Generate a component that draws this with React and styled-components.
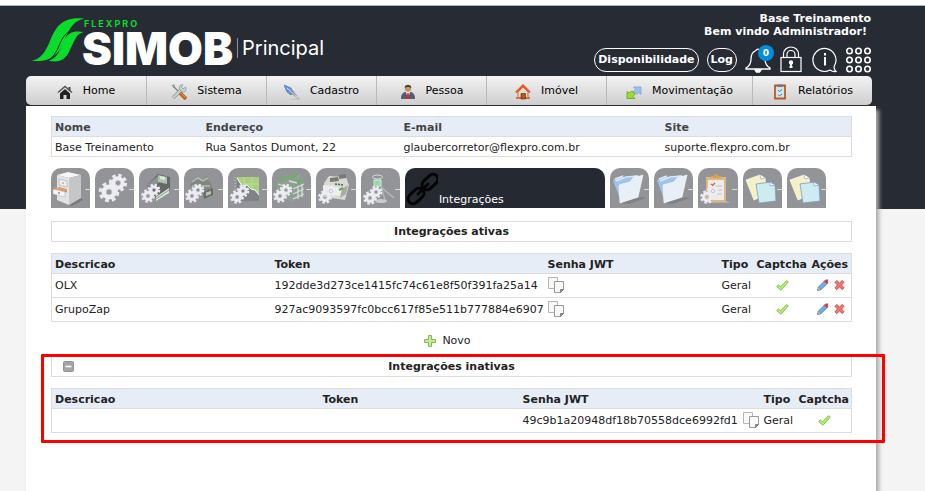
import React from 'react';
import styled, { createGlobalStyle } from 'styled-components';

const GlobalStyle = createGlobalStyle`
  * {
    box-sizing: border-box;
  }

  body {
    margin: 0;
    background: #f4f4f4;
    color: #222;
    font-family: 'DejaVu Sans', Verdana, sans-serif;
    font-size: 11px;
    line-height: 13px;
  }
`;

const Page = styled.div`
  display: flex;
  flex-direction: column;
  min-height: 100vh;
  padding: 0 49px 0 26px;
  border-top: 5px solid #fff;
  background: linear-gradient(#a9b8ad 1px, #272b33 1px, #272b33 204px, #f4f4f4 204px);
`;

const Header = styled.header`
  display: flex;
  justify-content: space-between;
  height: 71px;
  padding: 7px 5px 0 5px;
  color: #fff;
`;

const Brand = styled.a`
  display: flex;
  align-items: flex-start;
  padding-top: 5px;
  color: #fff;
  text-decoration: none;
  font-family: Inter, sans-serif;
`;

const BrandName = styled.div`
  display: flex;
  flex-direction: column;
  padding-top: 2px;
  margin-left: -3px;
`;

const Company = styled.span`
  padding-left: 2px;
  color: #0bdc2c;
  font-size: 9px;
  font-weight: 700;
  line-height: 10px;
  letter-spacing: 2px;
`;

const Product = styled.span`
  font-size: 45px;
  font-weight: 900;
  line-height: 40px;
`;

const PageName = styled.span`
  margin: 21px 0 0 4px;
  padding-left: 4px;
  border-left: 1px solid #8b8e93;
  font-size: 20px;
  line-height: 20px;
`;

const UserArea = styled.div`
  display: flex;
  flex-direction: column;
  align-items: flex-end;
  font-weight: bold;
`;

const Greeting = styled.div`
  padding-right: ${(props) => (props.$inset ? '4px' : '0')};
`;

const Tools = styled.div`
  display: flex;
  align-items: center;
  gap: 8px;
  margin-top: 8px;
`;

const PillButton = styled.button`
  height: 24px;
  padding: 0 3px;
  border: 1px solid #fff;
  border-radius: 12px;
  background: transparent;
  color: #fff;
  font: bold 11px 'DejaVu Sans', Verdana, sans-serif;
  cursor: pointer;
`;

const IconButton = styled.button`
  position: relative;
  display: flex;
  padding: 0;
  border: 0;
  background: transparent;
  cursor: pointer;
`;

const ToolButton = styled(IconButton)`
  margin-right: ${(props) => (props.$wide ? '2px' : '0')};
`;

const Badge = styled.span`
  position: absolute;
  top: -2px;
  right: -2px;
  width: 16px;
  height: 16px;
  border-radius: 50%;
  background: #058ddb;
  color: #fff;
  font: bold 9px/16px 'DejaVu Sans', Verdana, sans-serif;
  text-align: center;
`;

const Menu = styled.nav`
  display: grid;
  grid-template-columns: 121fr 120fr 110fr 110fr 120fr 146fr 119fr;
  height: 29px;
  margin-right: 4px;
  border-radius: 5px;
  background: linear-gradient(#f3f3f3, #cecece);
  overflow: hidden;
`;

const MenuItem = styled.a`
  display: flex;
  align-items: center;
  justify-content: center;
  gap: 10px;
  border-right: 1px solid #b9b9b9;
  color: #000;
  text-decoration: none;

  svg {
    margin-top: 2px;
  }

  &:last-child {
    border-right: 0;
  }
`;

const Panel = styled.main`
  flex: 1;
  margin-top: 1px;
  padding: 10px 24px 0 25px;
  background: #fff;
  box-shadow: 3px 4px 4px #aaa;
`;

const Table = styled.table`
  width: 100%;
  border: 1px solid #ddd;
  border-collapse: collapse;
  table-layout: fixed;

  th,
  td {
    padding: 1px 0 0 3px;
    text-align: left;
    white-space: nowrap;
  }

  th {
    height: 20px;
    border-bottom: 1px solid #ddd;
    background: #e7edf6;
    color: ${(props) => props.$headColor || '#222'};
  }

  td {
    height: 20px;
    border-bottom: 1px solid #ddd;
  }
`;

const ListTable = styled(Table)`
  td {
    height: 24px;
    padding: 0 0 1px 3px;
  }
`;

const CellIcons = styled.div`
  display: flex;
  align-items: center;
  justify-content: ${(props) => props.$align || 'flex-start'};
  gap: 5px;
`;

const Tabs = styled.div`
  display: flex;
  gap: 5px;
  margin: 11px 26px 13px 0;
`;

const Tab = styled.button`
  display: flex;
  flex: 1 1 0;
  align-items: flex-end;
  justify-content: center;
  min-width: 0;
  height: 40px;
  padding: 0;
  border: 0;
  border-radius: 10px 10px 0 0;
  background: #929498;
  overflow: hidden;
  cursor: pointer;
`;

const ActiveTab = styled(Tab)`
  flex: 0 0 200px;
  justify-content: flex-start;
  gap: 1px;
  background: #242932;
  color: #fff;
  font: 11px/17px 'DejaVu Sans', Verdana, sans-serif;
`;

const SectionTitle = styled.div`
  display: grid;
  grid-template-columns: 32px 1fr 32px;
  align-items: center;
  justify-items: center;
  height: 21px;
  margin-bottom: 11px;
  border: 1px solid #ddd;
`;

const Title = styled.h2`
  grid-column: 2;
  margin: 0;
  font-size: 11px;
  line-height: 19px;
`;

const NewButton = styled.button`
  display: flex;
  align-items: center;
  gap: 6px;
  margin: 12px auto 9px;
  padding: 0 8px 0 0;
  border: 0;
  background: transparent;
  color: #222;
  font: 11px/13px 'DejaVu Sans', Verdana, sans-serif;
  cursor: pointer;
`;

const Highlight = styled.section`
  position: relative;

  &::after {
    content: '';
    position: absolute;
    inset: -2px -33px -10px -10px;
    border: 3px solid #f00;
    border-radius: 1px;
    pointer-events: none;
  }
`;

const LogoMark = () => (
  <svg width="54" height="46" viewBox="90 50 162 138" fill="#0bdc2c" aria-hidden="true">
    <path d="M92 181C122 176 134 152 147 122C165 79 184 48 250 55C222 60 210 77 196 106C181 143 165 190 92 181Z" />
    <path d="M143 181C174 172 177 142 190 118C202 96 220 90 248 95C226 101 223 116 208 146C194 180 174 188 143 181Z" />
    <path d="M134 183C164 172 170 142 183 117C194 97 208 90 222 90" fill="none" stroke="#272b33" strokeWidth="3" />
  </svg>
);

const BellIcon = () => (
  <svg width="27" height="26" viewBox="0 0 27 26" fill="none" stroke="#fff" strokeWidth="1.3">
    <path d="M11 3.500a2.200 2.200 0 0 1 4 0C19 5 20 8 20 12c0 4 1.500 7 5 9v1H1v-1c3.500-2 5-5 5-9c0-4 1-7 5-8.500" />
    <path d="M10 23h6l-1.500 2h-3z" fill="#fff" />
  </svg>
);

const LockIcon = () => (
  <svg width="22" height="27" viewBox="0 0 22 27" fill="none" stroke="#fff" strokeWidth="1.200">
    <rect x="1" y="11.500" width="20" height="14" />
    <path d="M3.500 11.500V8a7.500 7 0 0 1 15 0v3.500M7 11.500V8.500a4 4 0 0 1 8 0v3" />
    <circle cx="11" cy="16.500" r="1.600" fill="#fff" />
    <path d="M11 17v4.500M9.500 21h3" strokeWidth="1.800" />
  </svg>
);

const InfoIcon = () => (
  <svg width="26" height="26" viewBox="0 0 26 26" fill="none" stroke="#fff" strokeWidth="1.200">
    <path d="M22.500 18.500A11.500 11.500 0 1 0 18 23c2 1.500 4 2 6 1.500c-1.500-1.500-2.500-3.500-1.500-6z" />
    <path d="M13 10v8.500M13 6v2.500" strokeWidth="2" />
  </svg>
);

const GridIcon = () => (
  <svg width="25" height="26" viewBox="0 0 25 26" fill="none" stroke="#fff" strokeWidth="1.600">
    {[4, 13, 22].map((y) =>
      [3.5, 12.5, 21.5].map((x) => <circle key={`${x}-${y}`} cx={x} cy={y} r="2.700" />)
    )}
  </svg>
);

const menuDrawings = {
  home: (
    <>
      <path d="M1 8.500L8 2.500l7 6" fill="none" stroke="#555" strokeWidth="1.600" />
      <path d="M11.500 3h2v3.500h-2z" fill="#444" />
      <path d="M3 9.500L8 5l5 4.500V15H9.500v-4h-3v4H3z" fill="#222" />
    </>
  ),
  tools: (
    <>
      <path d="M2 2l8 8" stroke="#7b8587" strokeWidth="1.500" />
      <path d="M1 1.500l2-1 1 1.500-1.500 1.500z" fill="#a8b1b0" stroke="#7b8587" strokeWidth=".5" />
      <path d="M2 14l8-8" stroke="#7d8b8b" strokeWidth="3.800" />
      <path d="M2 14l8-8" stroke="#c1cdcc" strokeWidth="2.600" />
      <path d="M14.500 3L12 5l-1.500-2L12 .800C9 0 7.500 3 8.500 5.500L11 8c3 1 5-2 3.500-5z" fill="#c5d1d0" stroke="#7d8b8b" strokeWidth=".6" />
      <path d="M9 9l6 6" stroke="#b86324" strokeWidth="3.800" />
      <path d="M9.500 8.800l5.500 5.500" stroke="#e99b59" strokeWidth="1" />
    </>
  ),
  pen: (
    <>
      <path d="M4 15.500h12l-1-1.500z" fill="#bbb" />
      <path d="M0 1l3 7 4 3 2-3-2-4z" fill="#629be6" stroke="#3a67a8" strokeWidth=".6" />
      <path d="M4 7.500l11.500 8L9 6.500z" fill="#888f98" />
      <path d="M3 4l11 10" stroke="#e5edf8" strokeWidth=".8" />
    </>
  ),
  person: (
    <>
      <circle cx="8" cy="4.500" r="3.200" fill="#c99463" />
      <path d="M4.700 4C4-.5 12-.5 11.300 4c-2-1.500-4.600-1.500-6.600 0z" fill="#514531" />
      <path d="M1 15c0-5 2-7 5-7h4c3 0 5 2 5 7z" fill="#565b72" />
      <path d="M6 8l2 7 2-7z" fill="#fff" />
      <path d="M7.300 9h1.400l.8 6h-3z" fill="#e02135" />
    </>
  ),
  house: (
    <>
      <path d="M3 8l5-5 5 5v6.500H3z" fill="#eadbc8" stroke="#a1785f" />
      <path d="M1 8.500L8 1.500l7 7" fill="none" stroke="#e65a2b" strokeWidth="2.200" />
      <path d="M1 14h14" stroke="#e0694b" strokeWidth="2" />
      <path d="M6 9.500h4.500V15H6z" fill="#b6571d" stroke="#733308" strokeWidth=".7" />
    </>
  ),
  arrows: (
    <>
      <path d="M7.500 3H15v7.500l-2.300-2L11 10.500 7 7.500 9.500 5z" fill="#9fbfeb" stroke="#7fa5dd" strokeWidth=".8" />
      <path d="M1 7.500l2 1.500 3-2 3 3-2 2.500L9 14.500H1z" fill="#9ddb32" stroke="#64a416" strokeWidth=".8" />
    </>
  ),
  report: (
    <>
      <path d="M3 1.500h10v13H3z" fill="#cfe3f0" stroke="#b45d22" strokeWidth="1.800" />
      <path d="M5.500.5h5V3h-5z" fill="#777" />
      <path d="M6 6l1.500 1.500L10 5.500M6 10.500L7.500 12l2.500-2" fill="none" stroke="#5d7886" />
    </>
  ),
};

const MenuIcon = ({ name }) => (
  <svg width="16" height="16" viewBox="0 0 16 16" aria-hidden="true">
    {menuDrawings[name]}
  </svg>
);

const Gear = ({ x, y, r }) => (
  <g fill="none">
    <circle cx={x} cy={y} r={r * 0.95} stroke="#e9e9ef" strokeWidth={r * 0.4} strokeDasharray={`${r * 0.42} ${r * 0.326}`} />
    <circle cx={x} cy={y} r={r * 0.56} stroke="#ededf3" strokeWidth={r * 0.55} />
    <circle cx={x} cy={y} r={r * 0.32} stroke="#b4b5bf" strokeWidth=".7" />
  </g>
);

const SmallGears = ({ x = 0, y = 0 }) => (
  <g>
    <Gear x={14 + x} y={22 + y} r={5.5} />
    <Gear x={8 + x} y={28 + y} r={6} />
  </g>
);

const Folder = () => (
  <>
    <path d="M10 35l22-6 4 1-17 6z" fill="#7f8185" />
    <path d="M3 12l9-4 3 2 12-3 2 3-18 24z" fill="#9fc3ea" />
    <path d="M5 11l8-3M6 13l10-4 12-1" fill="none" stroke="#dcebfb" strokeWidth="1.500" />
    <path d="M9 17l11-3 3-4 10-3-5 22-18 6z" fill="#e9eff6" stroke="#fff" strokeWidth=".6" />
  </>
);

const Papers = () => (
  <>
    <path d="M3 12l14-5 5 3 2 16-13 6z" fill="#f4f1c4" stroke="#fff" strokeWidth=".7" />
    <path d="M17 7l1 4 4-1" fill="#fff" stroke="#8a9cb0" strokeWidth=".6" />
    <path d="M13 16l15-2 4 3 1 16-17 2z" fill="#cfebf2" stroke="#7e9dbb" strokeWidth=".8" />
    <path d="M27 14v4l5-1z" fill="#fff" stroke="#7e9dbb" strokeWidth=".7" />
  </>
);

const tabDrawings = {
  cabinet: (
    <>
      <path d="M18 37l12-7 2 2-11 6z" fill="#77797c" />
      <path d="M6 7l11-3 13 3-12 3z" fill="#f6f6f6" />
      <path d="M6 7l12 3v27L6 32z" fill="#e3e3e3" />
      <path d="M18 10l12-3v23l-12 7z" fill="#c6c6c8" />
      <path d="M8 11l8 2v6l-8-2z" fill="#eee" stroke="#aaa" strokeWidth=".6" />
      <path d="M8 19l8 2.500v3L8 22z" fill="#8d8d8d" />
      <path d="M3 19l13 2v2.500L5 22z" fill="#ed9b5c" />
      <path d="M2 21l12 3v5L2 26z" fill="#f5f5f5" stroke="#aaa" strokeWidth=".5" />
      <circle cx="12" cy="15" r=".8" fill="#888" />
      <circle cx="8" cy="25" r=".9" fill="#888" />
    </>
  ),
  gears: (
    <>
      <Gear x={23} y={15} r={8} />
      <Gear x={14} y={24} r={9} />
    </>
  ),
  box: (
    <>
      <g opacity=".85">
        <path d="M7 17L18 6l12 3v12L17 32z" fill="#5d6062" />
        <path d="M7 17l11-9 4 3-10 10z" fill="#8f9294" />
        <path d="M18 7l9 2v7l-9-2z" fill="#adcfad" />
        <path d="M20 8l5 1v3l-5-1z" fill="#eef3ee" />
        <path d="M16 29l13-9v5l-13 8z" fill="#ebf3e8" />
        <path d="M16 31l13-9" stroke="#72aa6b" />
      </g>
      <SmallGears />
    </>
  ),
  machines: (
    <>
      <g opacity=".75">
        <path d="M6 17l6-7 6 2 6-4v4l4 5v5l-9 4z" fill="#7b817c" />
        <path d="M8 14l6-4 5 3 5-3M8 18h18" fill="none" stroke="#c0cfb1" strokeWidth="1.500" />
        <path d="M19 24l10-4v7l-9 4z" fill="#5c605b" />
        <path d="M22 24.500l5-1.500v3l-5 2z" fill="#b8dcb3" />
      </g>
      <SmallGears />
    </>
  ),
  chart: (
    <>
      <path d="M9 9h22v23H9z" fill="#a9d07e" />
      <path d="M9 16h22M9 23h22M16 9v22M24 9v22" stroke="#c3e2a2" strokeWidth=".7" />
      <path d="M9 10l5 8 5-1 4 4 4 1 4 5v6H9z" fill="#808287" />
      <path d="M9 10l5 8 5-1 4 4 4 1 4 5" fill="none" stroke="#fff" />
      <path d="M7 9v23" stroke="#c9c9c9" strokeDasharray="1 2" />
      <SmallGears x={1} y={1} />
    </>
  ),
  buildings: (
    <>
      <g opacity=".85">
        <path d="M5 13l11-6 4 2 8-3 4 7v16l-12 5-15-7z" fill="#8fa293" />
        <path d="M5 12l9-5 3 2-9 6zM16 9l6-4 4 2-7 5zM21 15l6-4 5 2-8 5z" fill="#72ad6b" />
        <path d="M6 16l9 3M17 13l8 2M21 21l11-5M21 26l11-5M21 31l11-5M10 19v8M26 18v13M30 16v13" stroke="#e3e9e3" strokeWidth="1.300" />
      </g>
      <SmallGears />
    </>
  ),
  register: (
    <>
      <path d="M7 15l5-7 17 1 3 8-4 15-21-3z" fill="#d8d9d2" />
      <path d="M13 10l8-1 1 4-9 1zM22 7l7-1v4l-7 1z" fill="#777b74" />
      <path d="M6 17l19 3-2 8-17-3z" fill="#f0f0e9" />
      <path d="M25 21l6-4-2 9-6 4z" fill="#aaaaa0" />
      <path d="M18 16l9 1" stroke="#4f5d4c" strokeWidth="1.500" strokeDasharray="2 1" />
      <path d="M22 22l4-2" stroke="#61a75e" strokeWidth="2" />
      <SmallGears y={1} />
    </>
  ),
  lamp: (
    <>
      <path d="M13 12h7v6h-7z" fill="#a2caaf" stroke="#e4e9e6" />
      <ellipse cx="16.500" cy="9" rx="5" ry="2" fill="none" stroke="#dcdcdc" />
      <path d="M20 18l4 14M20 19l13 11M13 18l-3 9" stroke="#b9bbbf" strokeWidth="1.200" />
      <ellipse cx="20" cy="33" rx="6" ry="2" fill="#c9cacd" />
      <path d="M14.500 13v5M18 13v5" stroke="#8be3a8" strokeWidth="2" />
      <SmallGears x={1} y={2} />
    </>
  ),
  folder: <Folder />,
  clipboard: (
    <>
      <path d="M5 35h27l-3-2H8z" fill="#b0b1b4" />
      <path d="M8 9h20v25H8z" fill="#dcb77f" />
      <path d="M10 12h16v20H10z" fill="#ececec" />
      <path d="M13 10V8h3a2 2 0 0 1 4 0h3v2z" fill="#d8a351" />
      <path d="M13 16l1.500 1.500L17 15" fill="none" stroke="#e64d3f" strokeWidth="1.300" />
      <path d="M17 18h7M19 22h5M19 26h5" stroke="#c2c2c5" />
      <SmallGears x={1} y={1} />
    </>
  ),
  papers: <Papers />,
};

const TabIcon = ({ name }) => (
  <svg width="39" height="40" viewBox="0 0 39 40" aria-hidden="true">
    {tabDrawings[name]}
    <path d="M34.500 21.500h5" stroke="#fff" strokeDasharray="1.300 .6" />
  </svg>
);

const ChainIcon = () => (
  <svg width="33" height="40" viewBox="0 0 33 40" fill="none" stroke="#050505" strokeWidth="3" aria-hidden="true">
    <rect x="-9" y="-5" width="18" height="10" rx="5" transform="translate(11 28) rotate(-43)" />
    <rect x="-9" y="-5" width="18" height="10" rx="5" transform="translate(25 14) rotate(-43)" />
    <path d="M13 26l10-10" strokeLinecap="round" />
  </svg>
);

const CopyIcon = () => (
  <svg width="16" height="16" viewBox="0 0 16 16" fill="#f8f8f8" stroke="#999">
    <path d="M.5.500h9v11h-9z" stroke="#b5b5b5" />
    <path d="M6.500 4.500h9v8l-3 3h-6z" />
    <path d="M15.500 12.500h-3v3z" fill="#999" stroke="#666" strokeWidth=".7" />
  </svg>
);

const CheckIcon = () => (
  <svg width="13" height="11" viewBox="0 0 13 11" role="img" aria-label="Sim">
    <path d="M.7 6.500L2.500 5l2 1.700L10.500.700l1.800 1.200L5 10.200z" fill="#b4ee6c" stroke="#7dbb4a" strokeWidth=".9" />
  </svg>
);

const PencilIcon = () => (
  <svg width="12" height="12" viewBox="0 0 12 12">
    <path d="M.7 11.300L1.500 8l6.500-6.500 2.700 2.700L4 10.600z" fill="#6aafea" stroke="#3d76b4" strokeWidth=".8" />
    <path d="M.5 11.500l1-3.500L4 10.600z" fill="#c9c2b8" stroke="#777" strokeWidth=".5" />
    <path d="M7 2.300L8.800.600h2.400v2.800L9.700 5z" fill="#d93f4d" />
  </svg>
);

const RemoveIcon = () => (
  <svg width="11" height="12" viewBox="0 0 12 12">
    <path d="M1 3L3 1l3 2.800L9 1l2 2-2.800 3L11 9l-2 2-3-2.800L3 11 1 9l2.800-3z" fill="#ee7671" stroke="#c94a48" />
  </svg>
);

const PlusIcon = () => (
  <svg width="12" height="12" viewBox="0 0 12 12">
    <path d="M4.500.500h3v4h4v3h-4v4h-3v-4h-4v-3h4z" fill="#c4eb98" stroke="#82b855" />
  </svg>
);

const CollapseIcon = () => (
  <svg width="11" height="11" viewBox="0 0 11 11">
    <rect x=".5" y=".5" width="10" height="10" rx="1" fill="#a3a6a9" stroke="#909396" />
    <path d="M2.500 5.500h6" stroke="#fff" strokeWidth="1.500" />
  </svg>
);

const menuItems = [
  { label: 'Home', icon: 'home' },
  { label: 'Sistema', icon: 'tools' },
  { label: 'Cadastro', icon: 'pen' },
  { label: 'Pessoa', icon: 'person' },
  { label: 'Imóvel', icon: 'house' },
  { label: 'Movimentação', icon: 'arrows' },
  { label: 'Relatórios', icon: 'report' },
];

const tabsBefore = ['cabinet', 'gears', 'box', 'machines', 'chart', 'buildings', 'register', 'lamp'];
const tabsAfter = ['folder', 'folder', 'clipboard', 'papers', 'papers'];

const activeRows = [
  { name: 'OLX', token: '192dde3d273ce1415fc74c61e8f50f391fa25a14', type: 'Geral' },
  { name: 'GrupoZap', token: '927ac9093597fc0bcc617f85e511b777884e6907', type: 'Geral' },
];

const inactiveRows = [
  { name: '', token: '', password: '49c9b1a20948df18b70558dce6992fd1', type: 'Geral' },
];

const CopyButton = () => (
  <IconButton aria-label="Copiar">
    <CopyIcon />
  </IconButton>
);

const App = () => {
  return (
    <Page>
      <GlobalStyle />
      <Header>
        <Brand href="#">
          <LogoMark />
          <BrandName>
            <Company>FLEXPRO</Company>
            <Product>SIMOB</Product>
          </BrandName>
          <PageName>Principal</PageName>
        </Brand>
        <UserArea>
          <Greeting>Base Treinamento</Greeting>
          <Greeting $inset>Bem vindo Administrador!</Greeting>
          <Tools>
            <PillButton>Disponibilidade</PillButton>
            <PillButton>Log</PillButton>
            <ToolButton aria-label="Notificações">
              <BellIcon />
              <Badge>0</Badge>
            </ToolButton>
            <ToolButton $wide aria-label="Bloquear">
              <LockIcon />
            </ToolButton>
            <ToolButton aria-label="Informações">
              <InfoIcon />
            </ToolButton>
            <ToolButton aria-label="Aplicativos">
              <GridIcon />
            </ToolButton>
          </Tools>
        </UserArea>
      </Header>

      <Menu>
        {menuItems.map((item) => (
          <MenuItem href="#" key={item.label}>
            <MenuIcon name={item.icon} />
            {item.label}
          </MenuItem>
        ))}
      </Menu>

      <Panel>
        <Table $headColor="#444">
          <colgroup>
            <col width="151" />
            <col width="198" />
            <col width="261" />
            <col />
          </colgroup>
          <thead>
            <tr>
              <th>Nome</th>
              <th>Endereço</th>
              <th>E-mail</th>
              <th>Site</th>
            </tr>
          </thead>
          <tbody>
            <tr>
              <td>Base Treinamento</td>
              <td>Rua Santos Dumont, 22</td>
              <td>glaubercorretor@flexpro.com.br</td>
              <td>suporte.flexpro.com.br</td>
            </tr>
          </tbody>
        </Table>

        <Tabs>
          {tabsBefore.map((name) => (
            <Tab key={name} aria-label={name}>
              <TabIcon name={name} />
            </Tab>
          ))}
          <ActiveTab>
            <ChainIcon />
            Integrações
          </ActiveTab>
          {tabsAfter.map((name, index) => (
            <Tab key={index} aria-label={name}>
              <TabIcon name={name} />
            </Tab>
          ))}
        </Tabs>

        <SectionTitle>
          <Title>Integrações ativas</Title>
        </SectionTitle>
        <ListTable>
          <colgroup>
            <col width="220" />
            <col />
            <col width="174" />
            <col width="35" />
            <col width="55" />
            <col width="43" />
          </colgroup>
          <thead>
            <tr>
              <th>Descricao</th>
              <th>Token</th>
              <th>Senha JWT</th>
              <th>Tipo</th>
              <th>Captcha</th>
              <th>Ações</th>
            </tr>
          </thead>
          <tbody>
            {activeRows.map((row) => (
              <tr key={row.name}>
                <td>{row.name}</td>
                <td>{row.token}</td>
                <td>
                  <CopyButton />
                </td>
                <td>{row.type}</td>
                <td>
                  <CellIcons $align="center">
                    <CheckIcon />
                  </CellIcons>
                </td>
                <td>
                  <CellIcons $align="center">
                    <IconButton aria-label="Editar">
                      <PencilIcon />
                    </IconButton>
                    <IconButton aria-label="Excluir">
                      <RemoveIcon />
                    </IconButton>
                  </CellIcons>
                </td>
              </tr>
            ))}
          </tbody>
        </ListTable>

        <NewButton>
          <PlusIcon />
          Novo
        </NewButton>

        <Highlight>
          <SectionTitle>
            <IconButton aria-label="Recolher">
              <CollapseIcon />
            </IconButton>
            <Title>Integrações inativas</Title>
          </SectionTitle>
          <ListTable>
            <colgroup>
              <col width="268" />
              <col width="200" />
              <col />
              <col width="35" />
              <col width="56" />
            </colgroup>
            <thead>
              <tr>
                <th>Descricao</th>
                <th>Token</th>
                <th>Senha JWT</th>
                <th>Tipo</th>
                <th>Captcha</th>
              </tr>
            </thead>
            <tbody>
              {inactiveRows.map((row) => (
                <tr key={row.password}>
                  <td>{row.name}</td>
                  <td>{row.token}</td>
                  <td>
                    <CellIcons>
                      {row.password}
                      <CopyButton />
                    </CellIcons>
                  </td>
                  <td>{row.type}</td>
                  <td>
                    <CellIcons $align="center">
                      <CheckIcon />
                    </CellIcons>
                  </td>
                </tr>
              ))}
            </tbody>
          </ListTable>
        </Highlight>
      </Panel>
    </Page>
  );
};

export default App;
